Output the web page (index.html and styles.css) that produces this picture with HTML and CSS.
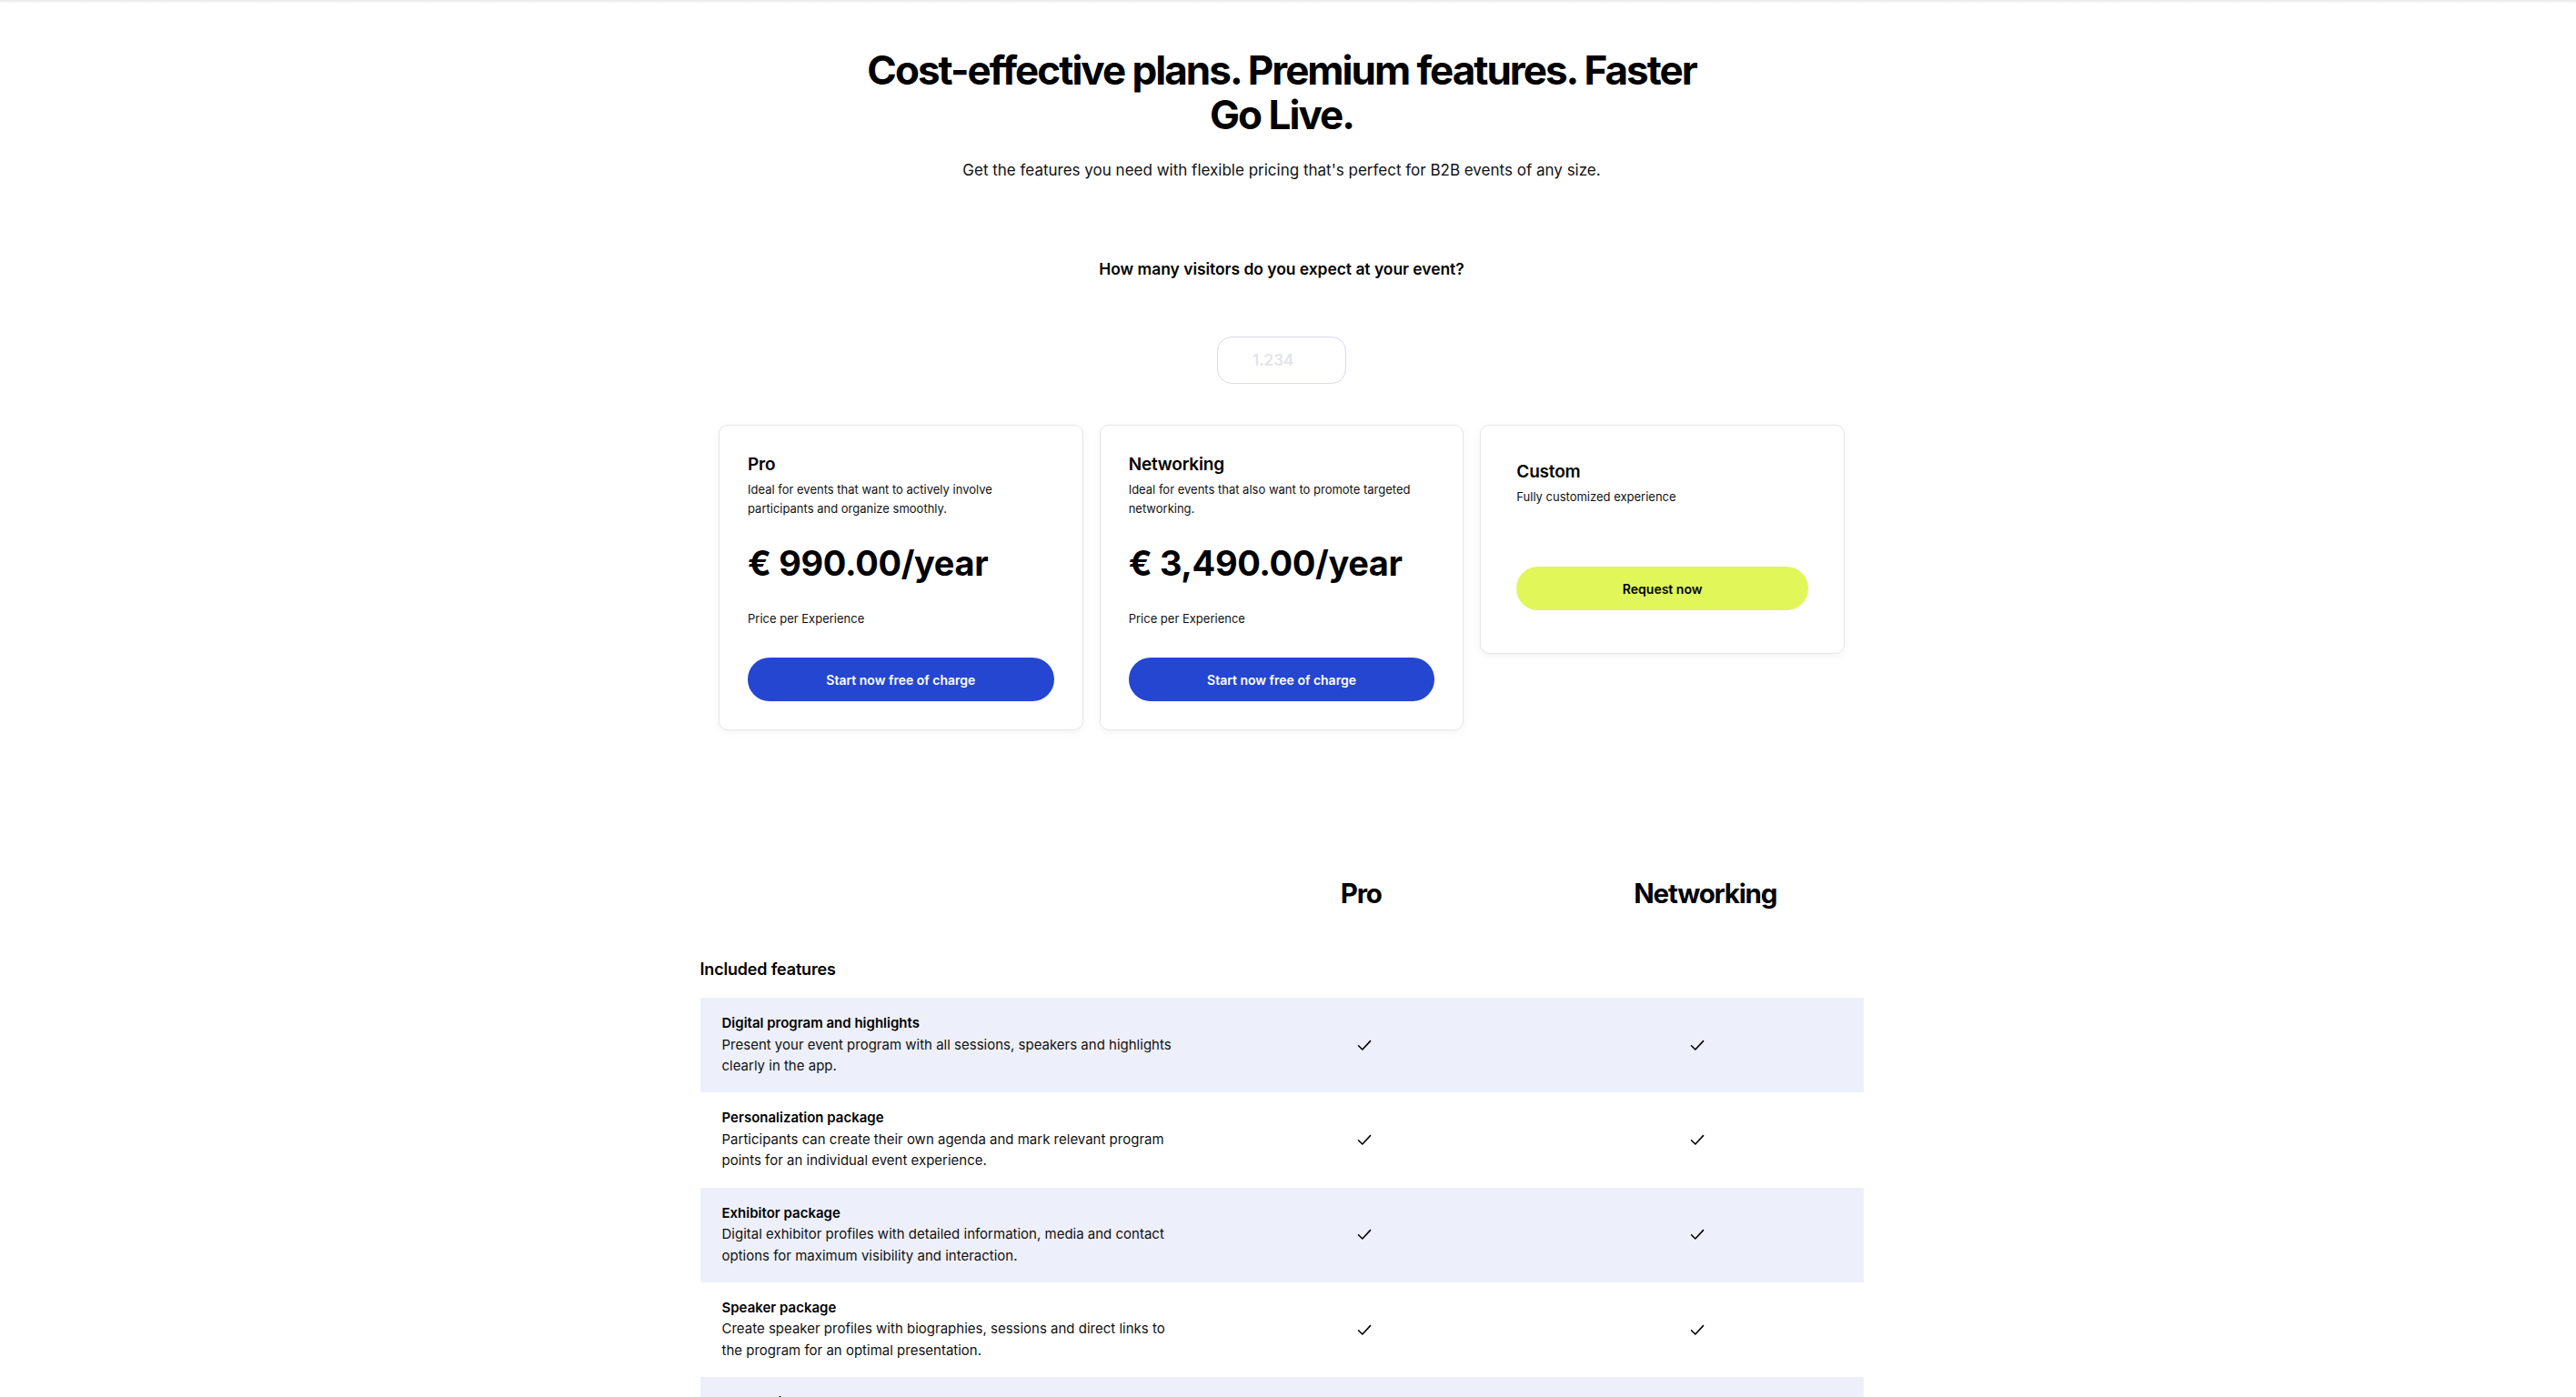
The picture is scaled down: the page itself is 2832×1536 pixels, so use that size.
FILE: index.html
```html
<!DOCTYPE html>
<html lang="en">
<head>
<meta charset="utf-8">
<title>Pricing</title>
<link rel="stylesheet" href="styles.css">
</head>
<body>
<div class="topline"></div>
<main class="page">
  <section class="hero">
    <h1 class="hero-title">Cost-effective plans. Premium features. Faster Go Live.</h1>
    <p class="hero-lead">Get the features you need with flexible pricing that's perfect for B2B events of any size.</p>
    <p class="hero-question">How many visitors do you expect at your event?</p>
    <input class="visitors" type="text" placeholder="1.234">
  </section>

  <section class="plans">
    <div class="plan">
      <h2 class="plan-name">Pro</h2>
      <p class="plan-desc">Ideal for events that want to actively involve participants and organize smoothly.</p>
      <p class="plan-price">€ 990.00/year</p>
      <p class="plan-note">Price per Experience</p>
      <a class="btn btn-blue" href="#">Start now free of charge</a>
    </div>
    <div class="plan">
      <h2 class="plan-name">Networking</h2>
      <p class="plan-desc">Ideal for events that also want to promote targeted networking.</p>
      <p class="plan-price">€ 3,490.00/year</p>
      <p class="plan-note">Price per Experience</p>
      <a class="btn btn-blue" href="#">Start now free of charge</a>
    </div>
    <div class="plan plan-custom">
      <h2 class="plan-name">Custom</h2>
      <p class="plan-desc">Fully customized experience</p>
      <a class="btn btn-lime" href="#">Request now</a>
    </div>
  </section>

  <section class="compare">
    <div class="compare-head">
      <div></div>
      <div class="col-title col-title-pro">Pro</div>
      <div class="col-title col-title-net">Networking</div>
    </div>
    <h3 class="group-title">Included features</h3>
    <div class="rows">
      <div class="row">
        <div class="feature">
          <p class="feature-name">Digital program and highlights</p>
          <p class="feature-desc">Present your event program with all sessions, speakers and highlights clearly in the app.</p>
        </div>
        <div class="cell"><svg class="check" viewBox="0 0 16 13"><path d="M1.5 6.8 L5.8 11 L14.5 1.6"/></svg></div>
        <div class="cell"><svg class="check" viewBox="0 0 16 13"><path d="M1.5 6.8 L5.8 11 L14.5 1.6"/></svg></div>
      </div>
      <div class="row">
        <div class="feature">
          <p class="feature-name">Personalization package</p>
          <p class="feature-desc">Participants can create their own agenda and mark relevant program points for an individual event experience.</p>
        </div>
        <div class="cell"><svg class="check" viewBox="0 0 16 13"><path d="M1.5 6.8 L5.8 11 L14.5 1.6"/></svg></div>
        <div class="cell"><svg class="check" viewBox="0 0 16 13"><path d="M1.5 6.8 L5.8 11 L14.5 1.6"/></svg></div>
      </div>
      <div class="row">
        <div class="feature">
          <p class="feature-name">Exhibitor package</p>
          <p class="feature-desc">Digital exhibitor profiles with detailed information, media and contact options for maximum visibility and interaction.</p>
        </div>
        <div class="cell"><svg class="check" viewBox="0 0 16 13"><path d="M1.5 6.8 L5.8 11 L14.5 1.6"/></svg></div>
        <div class="cell"><svg class="check" viewBox="0 0 16 13"><path d="M1.5 6.8 L5.8 11 L14.5 1.6"/></svg></div>
      </div>
      <div class="row">
        <div class="feature">
          <p class="feature-name">Speaker package</p>
          <p class="feature-desc">Create speaker profiles with biographies, sessions and direct links to the program for an optimal presentation.</p>
        </div>
        <div class="cell"><svg class="check" viewBox="0 0 16 13"><path d="M1.5 6.8 L5.8 11 L14.5 1.6"/></svg></div>
        <div class="cell"><svg class="check" viewBox="0 0 16 13"><path d="M1.5 6.8 L5.8 11 L14.5 1.6"/></svg></div>
      </div>
      <div class="row">
        <div class="feature">
          <p class="feature-name">Networking package</p>
          <p class="feature-desc">Participants find relevant contacts, chat with each other and arrange meetings directly in the app.</p>
        </div>
        <div class="cell"></div>
        <div class="cell"><svg class="check" viewBox="0 0 16 13"><path d="M1.5 6.8 L5.8 11 L14.5 1.6"/></svg></div>
      </div>
    </div>
  </section>
</main>
</body>
</html>
```
FILE: styles.css
```css
* { box-sizing: border-box; }
html, body { margin: 0; padding: 0; background: #fff; }
body {
  font-family: "Inter", "Liberation Sans", sans-serif;
  color: #111;
}
p, h1, h2, h3 { margin: 0; }

.topline {
  height: 3px;
  background: linear-gradient(#e9e9e9, #fafafa);
}

.page {
  padding-right: 14px;
  padding-bottom: 200px;
}

.hero {
  padding-top: 50px;
  display: flex;
  flex-direction: column;
  align-items: center;
  text-align: center;
}
.hero-title {
  max-width: 940px;
  font-size: 44px;
  line-height: 49px;
  font-weight: 700;
  letter-spacing: -0.045em;
  color: #000;
}
.hero-lead {
  margin-top: 24px;
  font-size: 17px;
  line-height: 24px;
  color: #111;
}
.hero-question {
  margin-top: 85px;
  font-size: 17.4px;
  line-height: 24px;
  font-weight: 600;
  color: #000;
}
.visitors {
  margin-top: 62px;
  width: 142px;
  height: 52px;
  border: 1px solid #dcd9ef;
  border-radius: 16px;
  padding: 0 0 0 38px;
  font-family: inherit;
  font-size: 17px;
  font-weight: 600;
  color: #111;
  background: #fff;
  outline: none;
}
.visitors::placeholder { color: #e3e3eb; }

.plans {
  width: 1238px;
  margin: 45px auto 0;
  display: grid;
  grid-template-columns: repeat(3, 1fr);
  gap: 18px;
  align-items: start;
}
.plan {
  border: 1px solid #e6e6e6;
  border-radius: 10px;
  padding: 31px;
  background: #fff;
  box-shadow: 0 2px 10px rgba(0, 0, 0, 0.05);
  display: flex;
  flex-direction: column;
}
.plan-name {
  font-size: 19px;
  line-height: 24px;
  font-weight: 600;
  letter-spacing: -0.01em;
  color: #000;
}
.plan-desc {
  margin-top: 5px;
  font-size: 13px;
  line-height: 21px;
  color: #111;
  max-width: 320px;
}
.plan-price {
  margin-top: 26px;
  font-size: 38px;
  line-height: 46px;
  font-weight: 700;
  letter-spacing: -0.01em;
  color: #000;
}
.plan-note {
  margin-top: 28px;
  font-size: 13px;
  line-height: 21px;
  color: #111;
}
.btn {
  display: flex;
  align-items: center;
  justify-content: center;
  height: 48px;
  border-radius: 24px;
  font-size: 14px;
  font-weight: 600;
  text-decoration: none;
}
.btn-blue {
  margin-top: 32px;
  background: #2546d0;
  color: #fff;
}
.plan-custom {
  padding: 39px 39px 47px;
}
.btn-lime {
  margin-top: 66px;
  background: #e0f659;
  color: #000;
}

.compare {
  width: 1279px;
  margin: 162px auto 0;
}
.compare-head {
  display: grid;
  grid-template-columns: 548px 1fr 1fr;
}
.col-title {
  text-align: center;
  font-size: 29.5px;
  line-height: 34px;
  font-weight: 700;
  letter-spacing: -0.04em;
  color: #000;
}
.col-title-pro { padding-right: 8px; }
.col-title-net { padding-left: 18px; }
.group-title {
  margin-top: 55px;
  font-size: 18px;
  line-height: 24px;
  font-weight: 600;
  letter-spacing: -0.01em;
  color: #000;
}
.rows { margin-top: 19px; }
.row {
  display: grid;
  grid-template-columns: 548px 1fr 1fr;
  height: 104.3px;
}
.row:nth-child(odd) { background: #edf0fb; }
.feature {
  padding: 16px 24px 0;
}
.feature-name {
  font-size: 15px;
  line-height: 23.5px;
  font-weight: 600;
  color: #000;
}
.feature-desc {
  max-width: 500px;
  font-size: 15px;
  line-height: 23.5px;
  color: #111;
}
.cell {
  display: flex;
  align-items: center;
  justify-content: center;
}
.check {
  width: 16px;
  height: 13px;
  fill: none;
  stroke: #000;
  stroke-width: 1.6;
  stroke-linecap: round;
  stroke-linejoin: round;
}
```
